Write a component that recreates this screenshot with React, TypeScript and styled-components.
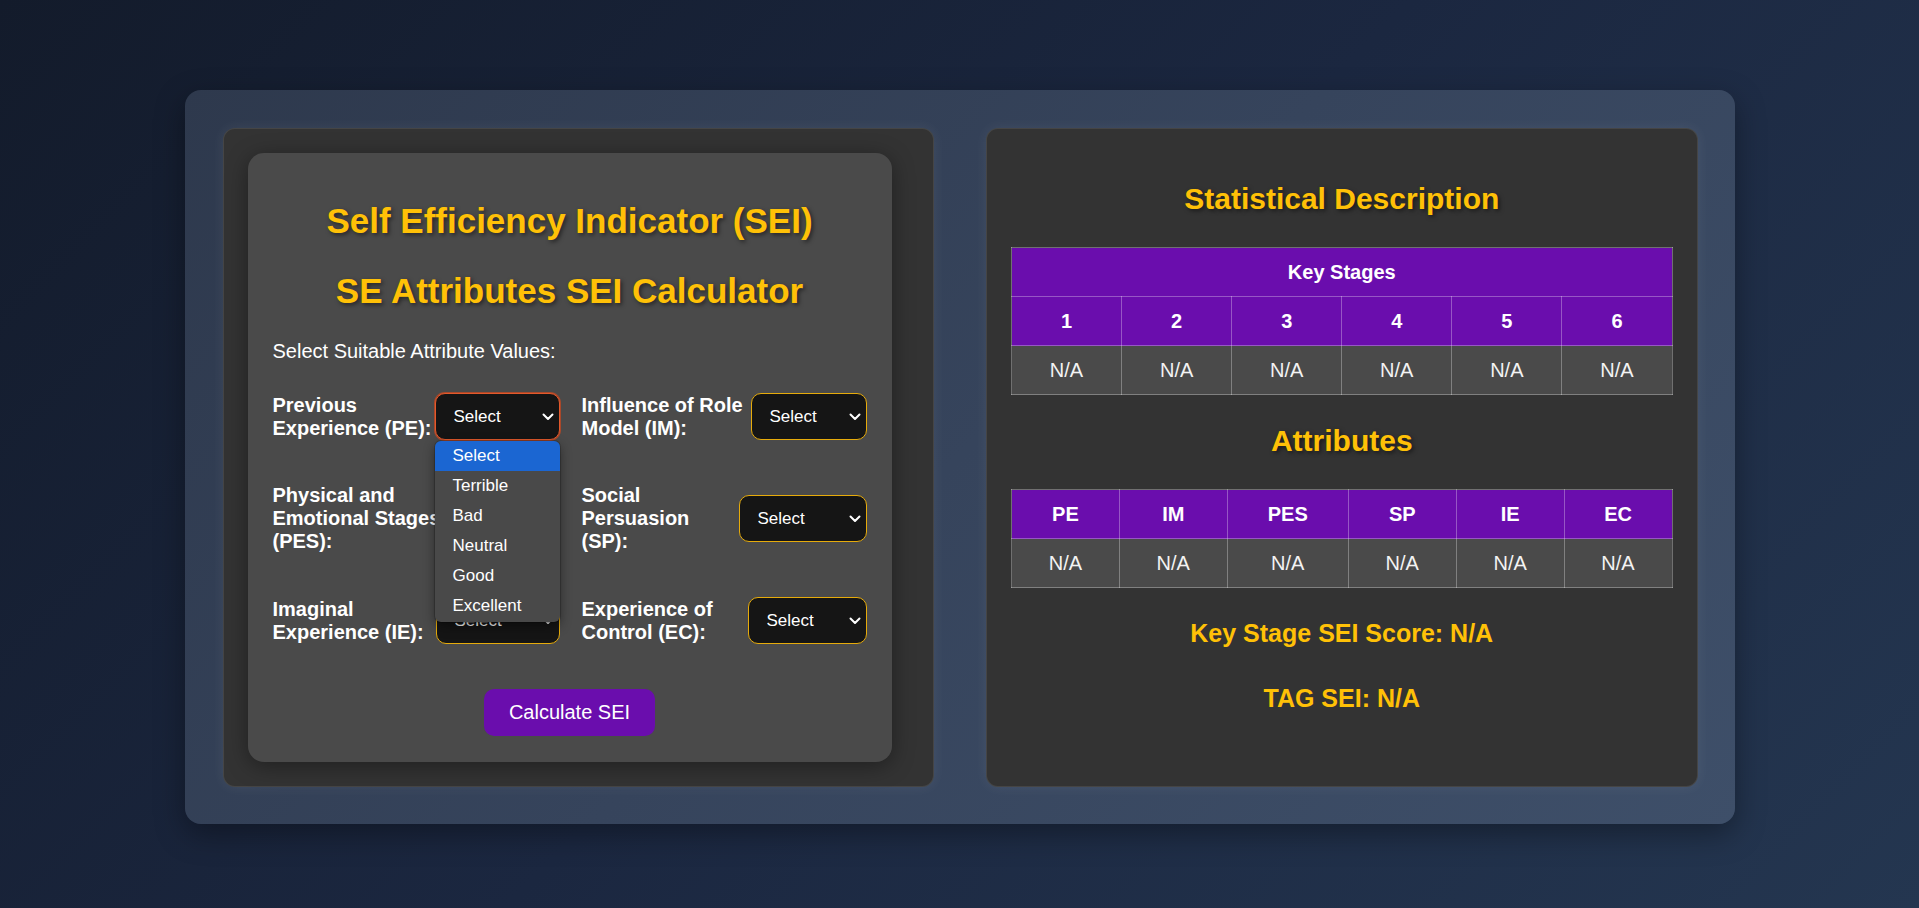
import React from 'react';
import styled, { createGlobalStyle, css } from 'styled-components';

const GlobalStyle = createGlobalStyle`
  html, body { margin: 0; padding: 0; }
  *, *::before, *::after { box-sizing: border-box; }
  body {
    min-height: 100vh;
    background: linear-gradient(135deg, #131b2b 0%, #1b2740 50%, #243650 100%);
    font-family: "Liberation Sans", Arial, Helvetica, sans-serif;
    color: #fff;
  }
`;

const Shell = styled.div`
  min-height: 100vh;
  display: flex;
  justify-content: center;
  align-items: flex-start;
  padding-top: 90px;
`;

const Container = styled.div`
  width: 1550px;
  display: flex;
  gap: 52px;
  padding: 38px 37px 37px 38px;
  border-radius: 16px;
  background: linear-gradient(135deg, #2e394d 0%, #36445c 50%, #3e4f69 100%);
  box-shadow: 0 10px 30px rgba(0, 0, 0, 0.35);
`;

const Panel = styled.section`
  flex: 1 1 0;
  min-width: 0;
  background: #333333;
  border: 1px solid rgba(255, 255, 255, 0.09);
  border-radius: 12px;
  padding: 24px;
  box-shadow: 0 0 14px rgba(255, 255, 255, 0.07);
  display: flex;
  flex-direction: column;
`;

const Card = styled.div`
  width: 644px;
  background: #4a4a4a;
  border-radius: 16px;
  padding: 25px 25px 26px;
  box-shadow: 0 4px 22px rgba(0, 0, 0, 0.38);
  display: flex;
  flex-direction: column;
`;

const Heading = styled.h1<{ $mt: number }>`
  margin: ${p => p.$mt}px 0 0;
  font-size: 35px;
  line-height: 1.15;
  font-weight: bold;
  color: #ffc107;
  text-align: center;
  text-shadow: 2px 2px 4px rgba(0, 0, 0, 0.5);
`;

const Intro = styled.p`
  margin: 29.5px 0 0;
  font-size: 20px;
  line-height: 23px;
  color: #fff;
`;

const FieldGrid = styled.div`
  margin-top: 30px;
  display: grid;
  grid-template-columns: 287px 285px;
  column-gap: 22px;
  row-gap: 44px;
`;

const Field = styled.div`
  display: flex;
  align-items: center;
  justify-content: space-between;
`;

const Label = styled.label`
  flex: 1 1 auto;
  min-width: 0;
  font-size: 20px;
  line-height: 23px;
  font-weight: bold;
  color: #fff;
`;

const LabelLine = styled.span`
  display: block;
  white-space: nowrap;
`;

const SelectWrap = styled.div<{ $w: number }>`
  position: relative;
  flex: 0 0 ${p => p.$w}px;
  width: ${p => p.$w}px;
`;

const SelectBox = styled.select<{ $focused?: boolean }>`
  appearance: none;
  -webkit-appearance: none;
  display: block;
  width: 100%;
  height: 47px;
  padding: 0 26px 0 18px;
  background: #151515;
  color: #fff;
  font-family: "Liberation Sans", Arial, sans-serif;
  font-size: 17px;
  border: 1px solid #e6ab0b;
  border-radius: 10px;
  outline: none;
  cursor: pointer;
  ${p =>
    p.$focused &&
    css`
      border-color: #e2592c;
      box-shadow: 0 0 0 1px #a9482a;
    `}
`;

const Chevron = styled.svg`
  position: absolute;
  right: 6px;
  top: 50%;
  transform: translateY(-50%);
  pointer-events: none;
`;

const Dropdown = styled.ul`
  position: absolute;
  top: calc(100% + 1px);
  left: 0;
  right: 0;
  z-index: 10;
  margin: 0;
  padding: 0 0 1px;
  list-style: none;
  background: #494949;
  border-radius: 6px;
  overflow: hidden;
  box-shadow: 0 0 0 1px rgba(0, 0, 0, 0.18), 0 4px 12px rgba(0, 0, 0, 0.45);
`;

const Option = styled.li<{ $active?: boolean }>`
  height: 30px;
  line-height: 30px;
  padding-left: 18px;
  font-size: 17px;
  color: #fff;
  background: ${p => (p.$active ? '#1b66d2' : 'transparent')};
`;

const CalcButton = styled.button`
  align-self: center;
  margin-top: 44.5px;
  padding: 12px 25px;
  border: none;
  border-radius: 10px;
  background: #6a0dad;
  color: #fff;
  font-family: "Liberation Sans", Arial, sans-serif;
  font-size: 20px;
  line-height: 23px;
  cursor: pointer;
`;

const SectionTitle = styled.h2`
  margin: 29px 0 30.5px;
  font-size: 30px;
  line-height: 34.5px;
  font-weight: bold;
  color: #ffc107;
  text-align: center;
  text-shadow: 2px 2px 4px rgba(0, 0, 0, 0.5);
`;

const DataTable = styled.table`
  width: 100%;
  border-collapse: collapse;
  font-size: 20px;
  line-height: 23px;
`;

const HeadCell = styled.th`
  padding: 12.5px 10px;
  background: #6a0dad;
  color: #fff;
  font-weight: bold;
  text-align: center;
  border: 1px solid rgba(255, 255, 255, 0.3);
`;

const BodyCell = styled.td`
  padding: 12.5px 10px;
  background: #4a4a4a;
  color: #f3f3f3;
  text-align: center;
  border: 1px solid rgba(255, 255, 255, 0.3);
`;

const ScoreLine = styled.p<{ $mt: number }>`
  margin: ${p => p.$mt}px 0 0;
  font-size: 25px;
  line-height: 28.75px;
  font-weight: bold;
  color: #ffc107;
  text-align: center;
`;

type FieldDef = {
  id: string;
  lines: string[];
  width: number;
  focused?: boolean;
  open?: boolean;
};

const fields: FieldDef[] = [
  { id: 'pe', lines: ['Previous', 'Experience (PE):'], width: 125, focused: true, open: true },
  { id: 'im', lines: ['Influence of Role', 'Model (IM):'], width: 116 },
  { id: 'pes', lines: ['Physical and', 'Emotional Stages', '(PES):'], width: 118 },
  { id: 'sp', lines: ['Social', 'Persuasion', '(SP):'], width: 128 },
  { id: 'ie', lines: ['Imaginal', 'Experience (IE):'], width: 124 },
  { id: 'ec', lines: ['Experience of', 'Control (EC):'], width: 119 },
];

const options = ['Select', 'Terrible', 'Bad', 'Neutral', 'Good', 'Excellent'];
const stages = ['1', '2', '3', '4', '5', '6'];
const attrs = ['PE', 'IM', 'PES', 'SP', 'IE', 'EC'];

const ChevronIcon = () => (
  <Chevron width="12" height="8" viewBox="0 0 12 8">
    <polyline points="1.5,1.5 6,6 10.5,1.5" fill="none" stroke="#fff" strokeWidth="2" strokeLinecap="round" strokeLinejoin="round" />
  </Chevron>
);

export default function App() {
  return (
    <>
      <GlobalStyle />
      <Shell>
        <Container>
          <Panel>
            <Card>
              <Heading $mt={23}>Self Efficiency Indicator (SEI)</Heading>
              <Heading $mt={29.4}>SE Attributes SEI Calculator</Heading>
              <Intro>Select Suitable Attribute Values:</Intro>
              <FieldGrid>
                {fields.map(f => (
                  <Field key={f.id}>
                    <Label htmlFor={f.id}>
                      {f.lines.map(l => (
                        <LabelLine key={l}>{l}</LabelLine>
                      ))}
                    </Label>
                    <SelectWrap $w={f.width}>
                      <SelectBox id={f.id} $focused={f.focused} defaultValue="">
                        <option value="">Select</option>
                        {options.slice(1).map(o => (
                          <option key={o} value={o}>
                            {o}
                          </option>
                        ))}
                      </SelectBox>
                      <ChevronIcon />
                      {f.open && (
                        <Dropdown>
                          {options.map((o, i) => (
                            <Option key={o} $active={i === 0}>
                              {o}
                            </Option>
                          ))}
                        </Dropdown>
                      )}
                    </SelectWrap>
                  </Field>
                ))}
              </FieldGrid>
              <CalcButton>Calculate SEI</CalcButton>
            </Card>
          </Panel>
          <Panel>
            <SectionTitle>Statistical Description</SectionTitle>
            <DataTable>
              <thead>
                <tr>
                  <HeadCell colSpan={6}>Key Stages</HeadCell>
                </tr>
                <tr>
                  {stages.map(s => (
                    <HeadCell key={s}>{s}</HeadCell>
                  ))}
                </tr>
              </thead>
              <tbody>
                <tr>
                  {stages.map(s => (
                    <BodyCell key={s}>N/A</BodyCell>
                  ))}
                </tr>
              </tbody>
            </DataTable>
            <SectionTitle>Attributes</SectionTitle>
            <DataTable>
              <thead>
                <tr>
                  {attrs.map(a => (
                    <HeadCell key={a}>{a}</HeadCell>
                  ))}
                </tr>
              </thead>
              <tbody>
                <tr>
                  {attrs.map(a => (
                    <BodyCell key={a}>N/A</BodyCell>
                  ))}
                </tr>
              </tbody>
            </DataTable>
            <ScoreLine $mt={30.7}>Key Stage SEI Score: N/A</ScoreLine>
            <ScoreLine $mt={36.8}>TAG SEI: N/A</ScoreLine>
          </Panel>
        </Container>
      </Shell>
    </>
  );
}
